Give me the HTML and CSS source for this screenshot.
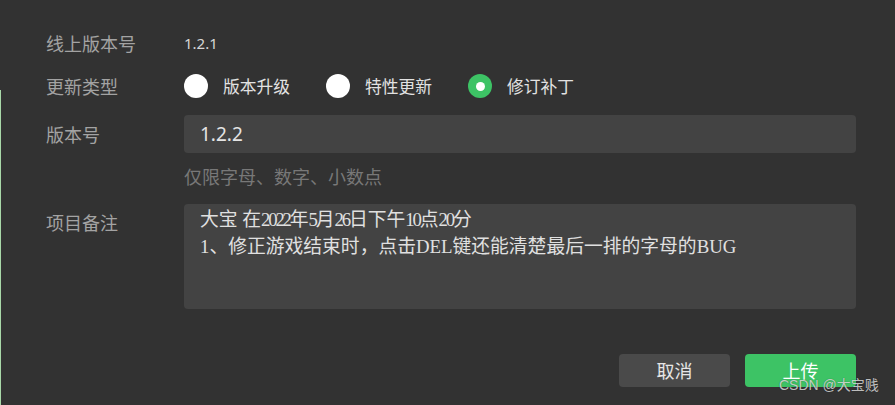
FILE: index.html
```html
<!DOCTYPE html>
<html lang="zh-CN">
<head>
<meta charset="utf-8">
<title>上传版本</title>
<link rel="stylesheet" href="styles.css">
</head>
<body>
<div class="page">
  <div class="edge"></div>
  <div class="form">
    <div class="row row-online">
      <div class="label">线上版本号</div>
      <div class="value">1.2.1</div>
    </div>
    <div class="row row-type">
      <div class="label">更新类型</div>
      <div class="radios">
        <div class="radio"><span class="dot"></span><span class="rlabel">版本升级</span></div>
        <div class="radio"><span class="dot"></span><span class="rlabel">特性更新</span></div>
        <div class="radio checked"><span class="dot"></span><span class="rlabel">修订补丁</span></div>
      </div>
    </div>
    <div class="row row-version">
      <div class="label">版本号</div>
      <div class="input">1.2.2</div>
    </div>
    <div class="row row-hint">
      <div class="label"></div>
      <div class="hint">仅限字母、数字、小数点</div>
    </div>
    <div class="row row-note">
      <div class="label note-label">项目备注</div>
      <div class="textarea">大宝 在<span class="num">2022</span>年<span class="num">5</span>月<span class="num">26</span>日下午<span class="num">10</span>点<span class="num">20</span>分<br>1、修正游戏结束时，点击DEL键还能清楚最后一排的字母的BUG</div>
    </div>
    <div class="actions">
      <div class="btn btn-cancel">取消</div>
      <div class="btn btn-ok">上传</div>
    </div>
  </div>
  <div class="watermark">CSDN @大宝贱</div>
</div>
</body>
</html>
```
FILE: styles.css
```css
* { box-sizing: border-box; }
html, body {
  margin: 0;
  padding: 0;
  background: #323232;
}
body {
  width: 895px;
  height: 405px;
  overflow: hidden;
  font-family: "Noto Sans CJK SC", "Noto Sans", sans-serif;
}
.page {
  position: relative;
  width: 895px;
  height: 405px;
  background: #323232;
}
.edge {
  position: absolute;
  left: 0;
  top: 90px;
  bottom: 0;
  width: 1px;
  background: #a8d8a8;
}
.form {
  padding: 31px 39px 0 46px;
  display: flex;
  flex-direction: column;
}
.row {
  display: flex;
  align-items: center;
}
.label {
  width: 138px;
  flex: none;
  font-size: 18px;
  line-height: 24px;
  color: #a3a3a3;
}
.row-online { height: 24px; }
.value {
  font-family: "Noto Sans", sans-serif;
  font-size: 15px;
  color: #d6d6d6;
  line-height: 24px;
}
.row-type { height: 24px; margin-top: 19px; }
.radios { display: flex; gap: 36px; }
.radio { display: flex; align-items: center; gap: 15px; }
.dot {
  width: 24px;
  height: 24px;
  border-radius: 50%;
  background: #ffffff;
  display: flex;
  align-items: center;
  justify-content: center;
}
.checked .dot { background: #3dc365; }
.checked .dot::after {
  content: "";
  width: 9px;
  height: 9px;
  border-radius: 50%;
  background: #ffffff;
}
.rlabel {
  font-size: 16.75px;
  line-height: 24px;
  color: #e2e2e2;
}
.row-version { margin-top: 17px; }
.input {
  flex: 1;
  height: 38px;
  background: #434343;
  border-radius: 4px;
  padding-left: 16px;
  font-family: "Noto Sans", sans-serif;
  font-size: 19px;
  line-height: 38px;
  color: #e4e4e4;
}
.row-hint { margin-top: 11px; }
.hint {
  font-size: 18px;
  line-height: 24px;
  color: #787878;
}
.row-note { margin-top: 16px; align-items: flex-start; }
.note-label { padding-top: 6px; }
.textarea {
  flex: 1;
  height: 105px;
  background: #434343;
  border-radius: 4px;
  padding: 2px 16px 0;
  font-family: "Liberation Serif", "Noto Sans CJK SC", serif;
  font-size: 18.8px;
  line-height: 27px;
  color: #e0e0e0;
}
.num { letter-spacing: -2.2px; }
.actions {
  display: flex;
  justify-content: flex-end;
  gap: 15px;
  margin-top: 45px;
}
.btn {
  width: 111px;
  height: 33px;
  border-radius: 4px;
  font-size: 18px;
  line-height: 33px;
  text-align: center;
}
.btn-cancel { background: #4a4a4a; color: #e6e6e6; }
.btn-ok { background: #3dc365; color: #ffffff; }
.watermark {
  position: absolute;
  left: 779px;
  top: 375px;
  font-family: "Liberation Sans", "Noto Sans CJK SC", sans-serif;
  font-size: 14px;
  line-height: 20px;
  color: rgba(235, 235, 235, 0.8);
  text-shadow: 0 0 1px rgba(0, 0, 0, 0.5);
}
```
